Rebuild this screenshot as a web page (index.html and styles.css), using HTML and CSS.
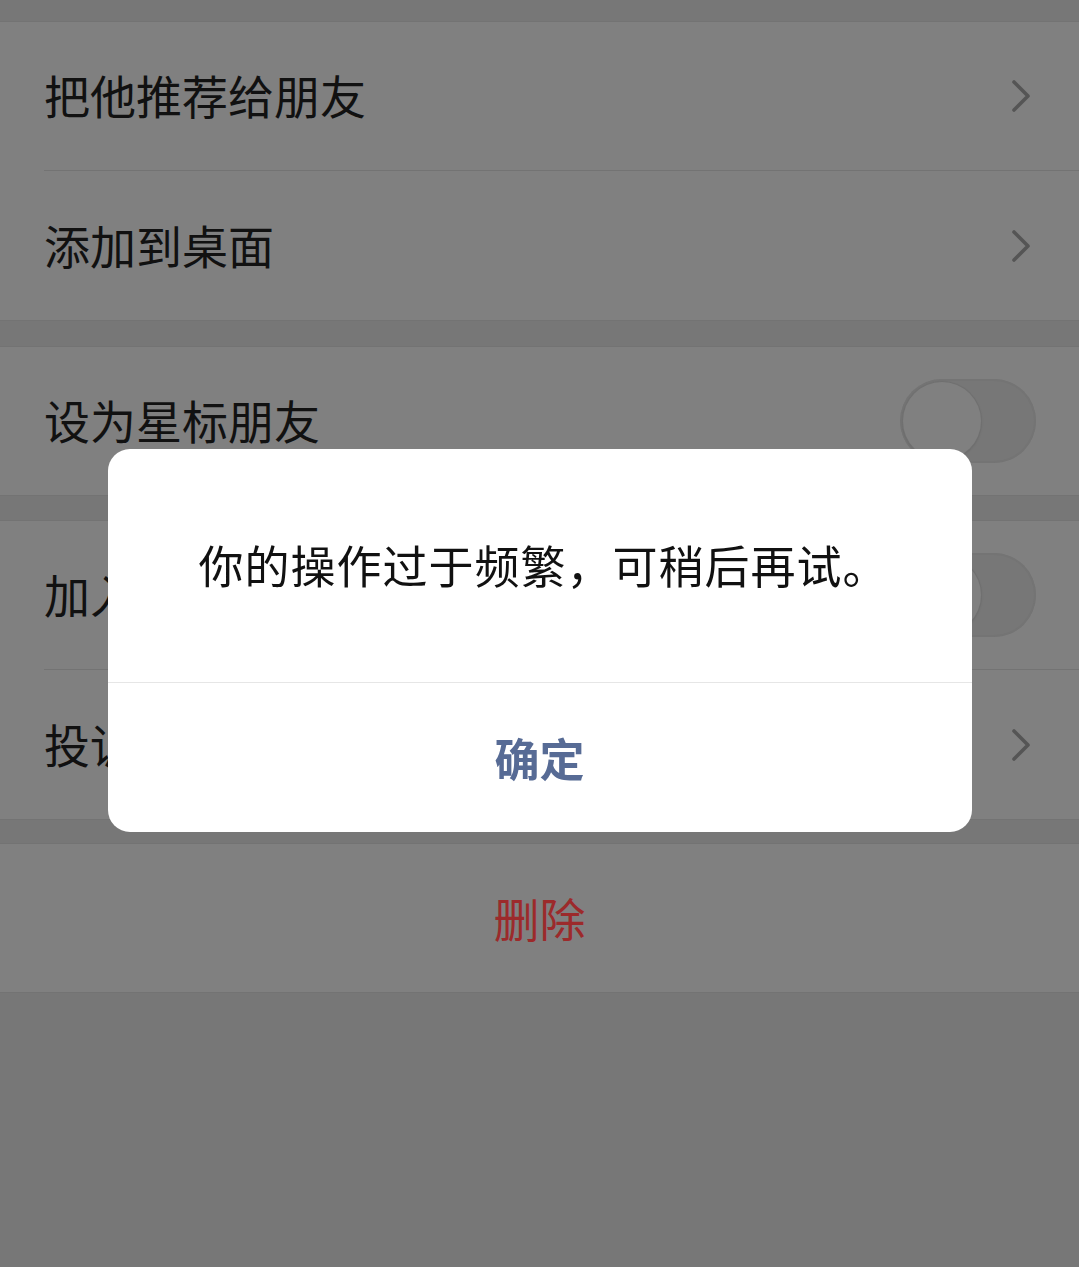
FILE: index.html
```html
<!DOCTYPE html>
<html lang="zh-CN">
<head>
<meta charset="utf-8">
<title>设置</title>
<link rel="stylesheet" href="styles.css">
</head>
<body>
<div class="page">
  <div class="gap gap-top"></div>
  <div class="group">
    <div class="cell">
      <span class="label">把他推荐给朋友</span>
      <svg class="chev" viewBox="0 0 20 32" width="20" height="32"><path d="M3 2 L17 16 L3 30" fill="none" stroke="#555" stroke-width="3.6" stroke-linecap="round" stroke-linejoin="round"/></svg>
    </div>
    <div class="cell">
      <span class="label">添加到桌面</span>
      <svg class="chev" viewBox="0 0 20 32" width="20" height="32"><path d="M3 2 L17 16 L3 30" fill="none" stroke="#555" stroke-width="3.6" stroke-linecap="round" stroke-linejoin="round"/></svg>
    </div>
  </div>
  <div class="gap gap-a"></div>
  <div class="group">
    <div class="cell cell-switch">
      <span class="label">设为星标朋友</span>
      <span class="switch"><span class="knob"></span></span>
    </div>
  </div>
  <div class="gap gap-b"></div>
  <div class="group">
    <div class="cell cell-switch">
      <span class="label">加入黑名单</span>
      <span class="switch"><span class="knob"></span></span>
    </div>
    <div class="cell">
      <span class="label">投诉</span>
      <svg class="chev" viewBox="0 0 20 32" width="20" height="32"><path d="M3 2 L17 16 L3 30" fill="none" stroke="#555" stroke-width="3.6" stroke-linecap="round" stroke-linejoin="round"/></svg>
    </div>
  </div>
  <div class="gap gap-c"></div>
  <div class="group">
    <div class="cell cell-center">
      <span class="danger">删除</span>
    </div>
  </div>
</div>

<div class="mask">
  <div class="dialog">
    <div class="dialog-body">你的操作过于频繁，可稍后再试。</div>
    <div class="dialog-foot">确定</div>
  </div>
</div>
</body>
</html>
```

FILE: styles.css
```css
html, body {
  margin: 0;
  padding: 0;
}

body {
  width: 1079px;
  height: 1267px;
  overflow: hidden;
  background: #777777;
  font-family: "Noto Sans CJK SC", "Noto Sans", sans-serif;
  color: #111111;
  text-spacing-trim: space-all;
}

.page {
  display: flex;
  flex-direction: column;
}

.gap {
  background: #777777;
}
.gap-top { height: 21px; }
.gap-a { height: 25px; }
.gap-b { height: 24px; }
.gap-c { height: 23px; }

.group {
  background: #808080;
  box-shadow: inset 0 1px 0 #737373, inset 0 -1px 0 #737373;
}

.cell {
  position: relative;
  height: 150px;
  display: flex;
  align-items: center;
  justify-content: space-between;
  padding: 0 48px 0 44px;
  box-sizing: border-box;
}

.cell + .cell::before {
  content: "";
  position: absolute;
  left: 44px;
  right: 0;
  top: -1px;
  height: 1px;
  background: #737373;
}

.label {
  font-size: 46px;
  line-height: 1;
  color: #111111;
  margin-bottom: 5px;
}

.chev {
  display: block;
}

.cell-switch {
  padding-right: 43px;
}

.switch {
  width: 136px;
  height: 84px;
  border-radius: 42px;
  background: #777777;
  box-shadow: inset 0 0 0 2px #747474;
  display: flex;
  align-items: center;
  padding: 0 3px;
  box-sizing: border-box;
}

.knob {
  width: 78px;
  height: 78px;
  border-radius: 50%;
  background: #808080;
  box-shadow: 0 0 0 1px #707070, 0 1px 3px rgba(0, 0, 0, 0.15);
}

.cell-center {
  justify-content: center;
  padding: 0;
}

.danger {
  font-size: 46px;
  line-height: 1;
  color: #9c2a2b;
  margin-bottom: 3px;
}

.mask {
  position: fixed;
  inset: 0;
  display: flex;
  align-items: center;
  justify-content: center;
}

.dialog {
  width: 864px;
  margin-top: 13px;
  background: #ffffff;
  border-radius: 22px;
  overflow: hidden;
  display: flex;
  flex-direction: column;
}

.dialog-body {
  height: 234px;
  box-sizing: border-box;
  padding-bottom: 2px;
  padding-left: 8px;
  display: flex;
  align-items: center;
  justify-content: center;
  font-size: 45px;
  line-height: 1;
  color: #111111;
  letter-spacing: 1px;
  border-bottom: 1px solid #e6e6e6;
}

.dialog-foot {
  height: 149px;
  box-sizing: border-box;
  padding-top: 1px;
  display: flex;
  align-items: center;
  justify-content: center;
  font-size: 45px;
  font-weight: 700;
  line-height: 1;
  color: #576b95;
}
```
